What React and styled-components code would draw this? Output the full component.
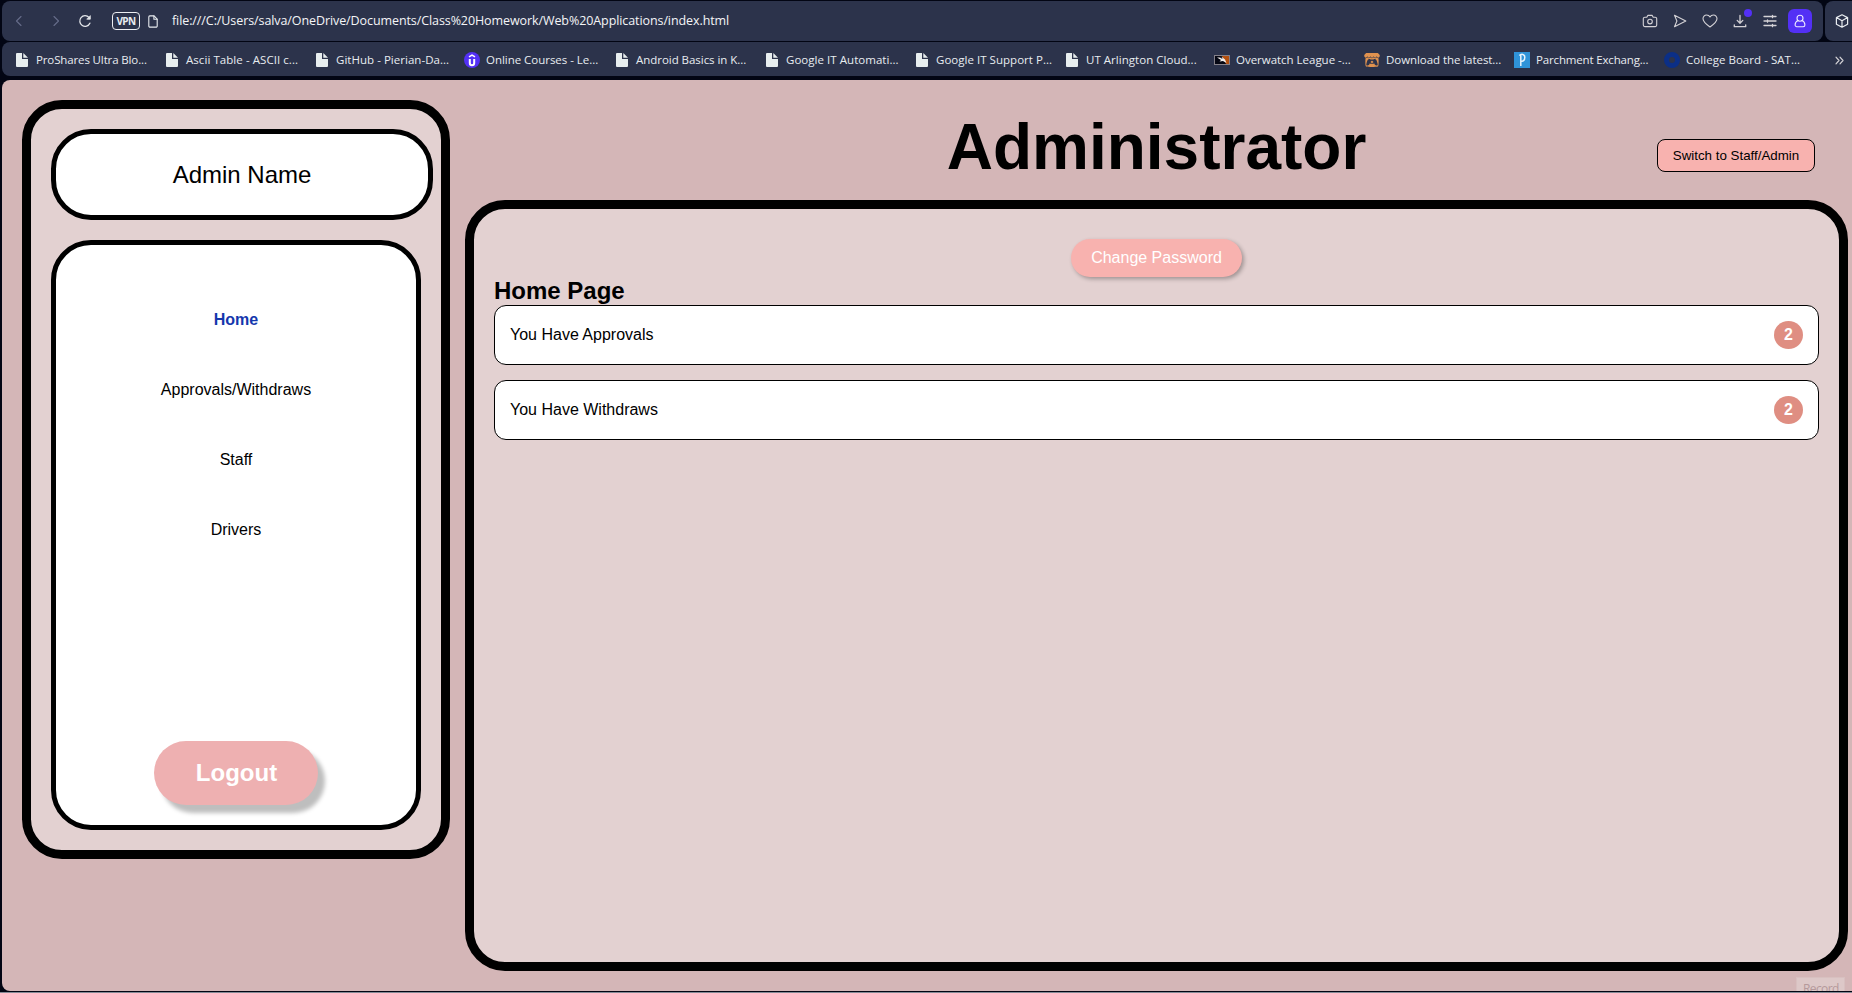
import React from 'react';
import styled, { createGlobalStyle } from 'styled-components';
import { FaItchIo } from 'react-icons/fa';

const GlobalStyle = createGlobalStyle`
  *, *::before, *::after { box-sizing: border-box; }
  body {
    margin: 0;
    overflow: hidden;
    background: #020513;
    font-family: "Liberation Sans", Arial, sans-serif;
    font-size: 16px;
    color: #000;
  }
  h1, h2, p { margin: 0; }
  svg { display: block; flex: none; }
`;

/* Browser window */

const Window = styled.div`
  display: flex;
  flex-direction: column;
  width: 1852px;
  height: 993px;
  padding: 1px 0 0 2px;
  border-bottom: 1px solid #868b96;
  background: #020513;
`;

const Chrome = styled.div`
  flex: none;
  font-family: "Open Sans", "Noto Sans", sans-serif;
  color: #e8ecf0;
`;

const AddressRow = styled.div`
  display: flex;
  gap: 2px;
  height: 40px;
  margin-bottom: 1px;
`;

const AddressBar = styled.div`
  display: flex;
  align-items: center;
  width: 1821px;
  padding: 0 11px 0 13px;
  border-radius: 8px;
  background: #2c334b;
`;

const SidePanelTab = styled.div`
  display: flex;
  flex: 1;
  align-items: center;
  padding: 0 0 0 10px;
  border-radius: 8px 0 0 8px;
  background: #2c334b;
`;

const NavButtons = styled.div`
  display: flex;
  align-items: center;
  gap: 29px;
  color: #666d8a;
`;

const Reload = styled.div`
  margin-left: 18px;
  color: #e4e6ea;
`;

const VpnBadge = styled.div`
  display: flex;
  align-items: center;
  justify-content: center;
  width: 28px;
  height: 18px;
  margin: 0 8px 0 20px;
  border: 1px solid #eceef2;
  border-radius: 4px;
  font-size: 10px;
  font-weight: 700;
  letter-spacing: -0.6px;
`;

const Url = styled.div`
  margin: 0 auto 0 14px;
  font-size: 12.5px;
  letter-spacing: -0.09px;
  line-height: 18px;
  white-space: nowrap;
  color: #f4f5f7;
`;

const Actions = styled.div`
  display: flex;
  align-items: center;
  color: #d4d2d6;
`;

const Action = styled.div`
  display: flex;
  position: relative;
  align-items: center;
  justify-content: center;
  width: 30px;
  height: 24px;
`;

const UpdateDot = styled.span`
  position: absolute;
  top: 0;
  right: 3px;
  width: 8px;
  height: 8px;
  border-radius: 50%;
  background: #5330f5;
`;

const Profile = styled.div`
  display: flex;
  align-items: center;
  justify-content: center;
  width: 24px;
  height: 24px;
  margin-left: 3px;
  border-radius: 6px;
  background: #5330f5;
  color: #e9e6ff;
`;

const BookmarkBar = styled.div`
  display: flex;
  align-items: center;
  height: 34px;
  margin-bottom: 4px;
  padding: 2px 8px 0 12px;
  border-radius: 8px 0 0 8px;
  background: #2c334b;
`;

const Bookmark = styled.div`
  display: flex;
  flex: none;
  align-items: center;
  gap: 6px;
  width: 150px;
  font-size: 11.5px;
  letter-spacing: ${(p) => p.$tracking}px;
  line-height: 16px;
  white-space: nowrap;
`;

const BookmarkIcon = styled.span`
  display: flex;
  align-items: center;
  justify-content: center;
  width: 16px;
  height: 16px;
`;

const BookmarkLabel = styled.span`
  margin-top: -1px;
`;

const More = styled.div`
  margin-left: auto;
  color: #d4d2d6;
`;

/* Page */

const Page = styled.main`
  display: flex;
  position: relative;
  flex: none;
  align-items: flex-start;
  gap: 15px;
  height: 911px;
  padding: 20px 4px 20px 20px;
  overflow: hidden;
  border-radius: 8px 0 0 8px;
  background: #d4b6b7;
`;

const Sidebar = styled.aside`
  display: flex;
  flex: none;
  flex-direction: column;
  gap: 20px;
  width: 428px;
  height: 759px;
  padding: 20px 8px 20px 20px;
  border: 9px solid #000;
  border-radius: 40px;
  background: #e3d1d1;
`;

const AdminCard = styled.div`
  display: flex;
  flex: none;
  align-items: center;
  justify-content: center;
  width: 382px;
  height: 91px;
  border: 5px solid #000;
  border-radius: 40px;
  background: #fff;
  font-size: 24px;
`;

const NavCard = styled.nav`
  display: flex;
  flex: 1;
  flex-direction: column;
  align-items: center;
  width: 370px;
  padding: 40px 0 20px;
  border: 5px solid #000;
  border-radius: 40px;
  background: #fff;
`;

const NavLink = styled.div`
  height: 70px;
  line-height: 70px;
  font-weight: ${(p) => (p.$active ? 700 : 400)};
  color: ${(p) => (p.$active ? '#1437ad' : '#000')};
`;

const Logout = styled.button`
  width: 164px;
  height: 64px;
  margin-top: auto;
  padding: 0 0 0 1px;
  border: 0;
  border-radius: 32px;
  background: #eeb0b1;
  box-shadow: 7px 8px 4px #bebebe;
  font: 700 24px "Liberation Sans", Arial, sans-serif;
  color: #fff;
`;

const Column = styled.section`
  display: flex;
  flex: 1;
  flex-direction: column;
  height: 871px;
`;

const Header = styled.header`
  display: grid;
  grid-template-columns: 1fr auto 1fr;
  align-items: start;
  flex: none;
  height: 100px;
  padding: 0 33px;
`;

const Title = styled.h1`
  grid-column: 2;
  margin-top: 11px;
  font-size: 64px;
  line-height: 73px;
`;

const SwitchButton = styled.button`
  justify-self: end;
  width: 158px;
  height: 33px;
  margin-top: 39px;
  padding: 0;
  border: 1px solid #000;
  border-radius: 8px;
  background: #f8b2af;
  font: 13.333px "Liberation Sans", Arial, sans-serif;
  color: #000;
`;

const Panel = styled.div`
  display: flex;
  flex: 1;
  flex-direction: column;
  padding: 30px 20px 20px;
  border: 9px solid #000;
  border-radius: 40px;
  background: #e3d1d1;
`;

const ChangePassword = styled.button`
  align-self: center;
  flex: none;
  height: 38px;
  padding: 0 20px;
  border: 0;
  border-radius: 20px;
  background: #f8b2af;
  box-shadow: 2px 2px 4px rgba(0, 0, 0, 0.3);
  font: 16px "Liberation Sans", Arial, sans-serif;
  color: #fff;
`;

const Heading = styled.h2`
  margin-bottom: 1px;
  font-size: 24px;
  line-height: 27px;
`;

const NoticeList = styled.div`
  display: flex;
  flex-direction: column;
  gap: 15px;
`;

const Notice = styled.div`
  display: flex;
  align-items: center;
  justify-content: space-between;
  height: 60px;
  padding: 0 15px;
  border: 1px solid #000;
  border-radius: 12px;
  background: #fff;
`;

const Count = styled.span`
  width: 29px;
  height: 28px;
  border-radius: 50%;
  background: #df8e82;
  font-weight: 700;
  line-height: 28px;
  text-align: center;
  color: #fff;
`;

const RecordHint = styled.div`
  position: absolute;
  right: 7px;
  bottom: 0;
  width: 49px;
  height: 14px;
  padding: 4px 0 0 6px;
  overflow: hidden;
  border: 1px solid #d8c0c0;
  border-bottom: 0;
  background: #ddc8c8;
  font: 12px/14px "Open Sans", sans-serif;
  letter-spacing: -0.6px;
  color: #b5999b;
`;

/* Icons */

const Line = ({ w, h, width = 1.1, children }) => (
  <svg
    width={w}
    height={h}
    viewBox={`0 0 ${w} ${h}`}
    fill="none"
    stroke="currentColor"
    strokeWidth={width}
    strokeLinecap="round"
    strokeLinejoin="round"
  >
    {children}
  </svg>
);

const BackIcon = () => <Line w={8} h={12}><path d="M6 1.5 1.5 6 6 10.5" /></Line>;
const ForwardIcon = () => <Line w={8} h={12}><path d="M2 1.5 6.5 6 2 10.5" /></Line>;
const ReloadIcon = () => (
  <Line w={14} h={14} width={1.3}>
    <path d="M11.9 9.2A5.3 5.3 0 1 1 11 3.4" />
    <path d="M12.3 2v3.2H9.1z" fill="currentColor" strokeWidth="0.8" />
  </Line>
);
const FileIcon = () => (
  <Line w={10} h={13} width={1.1}>
    <path d="M1.8.9h4.3l3.1 3.2v6.8a1.2 1.2 0 0 1-1.2 1.2H2a1.2 1.2 0 0 1-1.2-1.2V2A1.1 1.1 0 0 1 1.8.9z" />
    <path d="M5.9 1v3.3h3.2" />
  </Line>
);
const CameraIcon = () => (
  <Line w={16} h={14}>
    <path d="M2.8 3.2h2L5.9 1.4h4.2l1.1 1.8h2a1.5 1.5 0 0 1 1.5 1.5v6.4a1.5 1.5 0 0 1-1.5 1.5H2.8a1.5 1.5 0 0 1-1.5-1.5V4.7a1.5 1.5 0 0 1 1.5-1.5z" />
    <circle cx="8" cy="7.6" r="2.3" />
  </Line>
);
const SendIcon = () => (
  <Line w={14} h={14}><path d="M1.5 1.3 12.8 7 1.5 12.7 3.9 7z" /></Line>
);
const HeartIcon = () => (
  <Line w={16} h={14}>
    <path d="M8 13C4.4 10.4 1 7.9 1 4.7A3.6 3.6 0 0 1 4.6 1C6.1 1 7.3 1.7 8 3 8.7 1.7 9.9 1 11.4 1A3.6 3.6 0 0 1 15 4.7C15 7.9 11.6 10.4 8 13z" />
  </Line>
);
const DownloadIcon = () => (
  <Line w={14} h={14} width={1.3}>
    <path d="M7 1.5V9M4.2 6.4 7 9.2 9.8 6.4M1.3 10.8V12.7H12.7V10.8" />
  </Line>
);
const SlidersIcon = () => (
  <Line w={14} h={14} width={1.3}>
    <path d="M1 2.5H13M1 7H13M1 11.5H13M9.5 1.3V3.7M4.5 5.8V8.2M9.5 10.3V12.7" />
  </Line>
);
const UserIcon = () => (
  <Line w={12} h={14}>
    <circle cx="6" cy="4.2" r="3" />
    <path d="M4 6.5C2.2 7.3 1.1 8.9 1.1 11A1.7 1.7 0 0 0 2.8 12.7H9.2A1.7 1.7 0 0 0 10.9 11C10.9 8.9 9.8 7.3 8 6.5" />
  </Line>
);
const CubeIcon = () => (
  <Line w={14} h={14} width={1.2}>
    <path d="M7 .8 12.6 3.6V10.2L7 13.2 1.4 10.2V3.6zM1.4 3.6 7 6.7 12.6 3.6M7 6.7V13.2" />
  </Line>
);
const MoreIcon = () => (
  <Line w={9} h={9} width={1.2}><path d="M1 1.2 4 4.5 1 7.8M5 1.2 8 4.5 5 7.8" /></Line>
);

const PageGlyph = () => (
  <svg width="12" height="14" viewBox="0 0 12 14" fill="#e8eeef">
    <path d="M1 0H6V6H12V13a1 1 0 0 1-1 1H1a1 1 0 0 1-1-1V1a1 1 0 0 1 1-1zM7.3 0 12 4.8H7.3z" />
  </svg>
);
const CourseGlyph = () => (
  <svg width="16" height="16" viewBox="0 0 16 16">
    <circle cx="8" cy="8" r="8" fill="#5330f5" />
    <path d="M5 4.8 8 3 11 4.8" fill="none" stroke="#fff" strokeWidth="1.5" />
    <path d="M5.8 7V11A2 2 0 0 0 10.2 11V7" fill="none" stroke="#fff" strokeWidth="2" />
  </svg>
);
const LeagueGlyph = () => (
  <svg width="16" height="10" viewBox="0 0 16 10">
    <rect x=".5" y=".5" width="15" height="9" fill="#050713" stroke="#85818a" />
    <path d="M8 1H15V9H12z" fill="#b4500f" />
    <path d="M3 2.5H6L8.5 4 7.5 1.5 11 4.5 12.5 8 9 6 5.5 6.5 7 5z" fill="#f3efec" />
  </svg>
);
const ParchmentGlyph = () => (
  <svg width="16" height="16" viewBox="0 0 16 16">
    <rect width="16" height="16" fill="#2f93d8" />
    <path d="M6.8 14V2.8M5.3 3.6C7 1.8 10.8 1.6 10.8 5.3 10.8 8.6 8.8 9.7 7 9" fill="none" stroke="#e6f3fc" strokeWidth="1.5" />
  </svg>
);
const RingGlyph = () => (
  <svg width="16" height="16" viewBox="0 0 16 16">
    <circle cx="8" cy="8" r="5.5" fill="none" stroke="#0b2f87" strokeWidth="5" />
  </svg>
);

const bookmarks = [
  { label: 'ProShares Ultra Blo...', tracking: -0.13 },
  { label: 'Ascii Table - ASCII c...', tracking: 0.06 },
  { label: 'GitHub - Pierian-Da...', tracking: 0.03 },
  { label: 'Online Courses - Le...', tracking: -0.03, icon: <CourseGlyph /> },
  { label: 'Android Basics in K...', tracking: -0.04 },
  { label: 'Google IT Automati...', tracking: 0.04 },
  { label: 'Google IT Support P...', tracking: 0.03 },
  { label: 'UT Arlington Cloud...', tracking: 0.03 },
  { label: 'Overwatch League -...', tracking: -0.02, icon: <LeagueGlyph /> },
  { label: 'Download the latest...', tracking: -0.06, icon: <FaItchIo size={16} color="#e0924f" /> },
  { label: 'Parchment Exchang...', tracking: -0.16, icon: <ParchmentGlyph /> },
  { label: 'College Board - SAT...', tracking: 0.04, icon: <RingGlyph /> },
];

const links = ['Home', 'Approvals/Withdraws', 'Staff', 'Drivers'];

const notices = [
  { text: 'You Have Approvals', count: 2 },
  { text: 'You Have Withdraws', count: 2 },
];

function BrowserChrome() {
  return (
    <Chrome>
      <AddressRow>
        <AddressBar>
          <NavButtons>
            <BackIcon />
            <ForwardIcon />
          </NavButtons>
          <Reload><ReloadIcon /></Reload>
          <VpnBadge>VPN</VpnBadge>
          <FileIcon />
          <Url>file:///C:/Users/salva/OneDrive/Documents/Class%20Homework/Web%20Applications/index.html</Url>
          <Actions>
            <Action><CameraIcon /></Action>
            <Action><SendIcon /></Action>
            <Action><HeartIcon /></Action>
            <Action>
              <DownloadIcon />
              <UpdateDot />
            </Action>
            <Action><SlidersIcon /></Action>
            <Profile><UserIcon /></Profile>
          </Actions>
        </AddressBar>
        <SidePanelTab><CubeIcon /></SidePanelTab>
      </AddressRow>
      <BookmarkBar>
        {bookmarks.map((b) => (
          <Bookmark key={b.label} $tracking={b.tracking}>
            <BookmarkIcon>{b.icon || <PageGlyph />}</BookmarkIcon>
            <BookmarkLabel>{b.label}</BookmarkLabel>
          </Bookmark>
        ))}
        <More><MoreIcon /></More>
      </BookmarkBar>
    </Chrome>
  );
}

export default function App() {
  return (
    <Window>
      <GlobalStyle />
      <BrowserChrome />
      <Page>
        <Sidebar>
          <AdminCard>Admin Name</AdminCard>
          <NavCard>
            {links.map((name, i) => (
              <NavLink key={name} $active={i === 0}>{name}</NavLink>
            ))}
            <Logout>Logout</Logout>
          </NavCard>
        </Sidebar>
        <Column>
          <Header>
            <Title>Administrator</Title>
            <SwitchButton>Switch to Staff/Admin</SwitchButton>
          </Header>
          <Panel>
            <ChangePassword>Change Password</ChangePassword>
            <Heading>Home Page</Heading>
            <NoticeList>
              {notices.map((n) => (
                <Notice key={n.text}>
                  {n.text}
                  <Count>{n.count}</Count>
                </Notice>
              ))}
            </NoticeList>
          </Panel>
        </Column>
        <RecordHint>Record</RecordHint>
      </Page>
    </Window>
  );
}
